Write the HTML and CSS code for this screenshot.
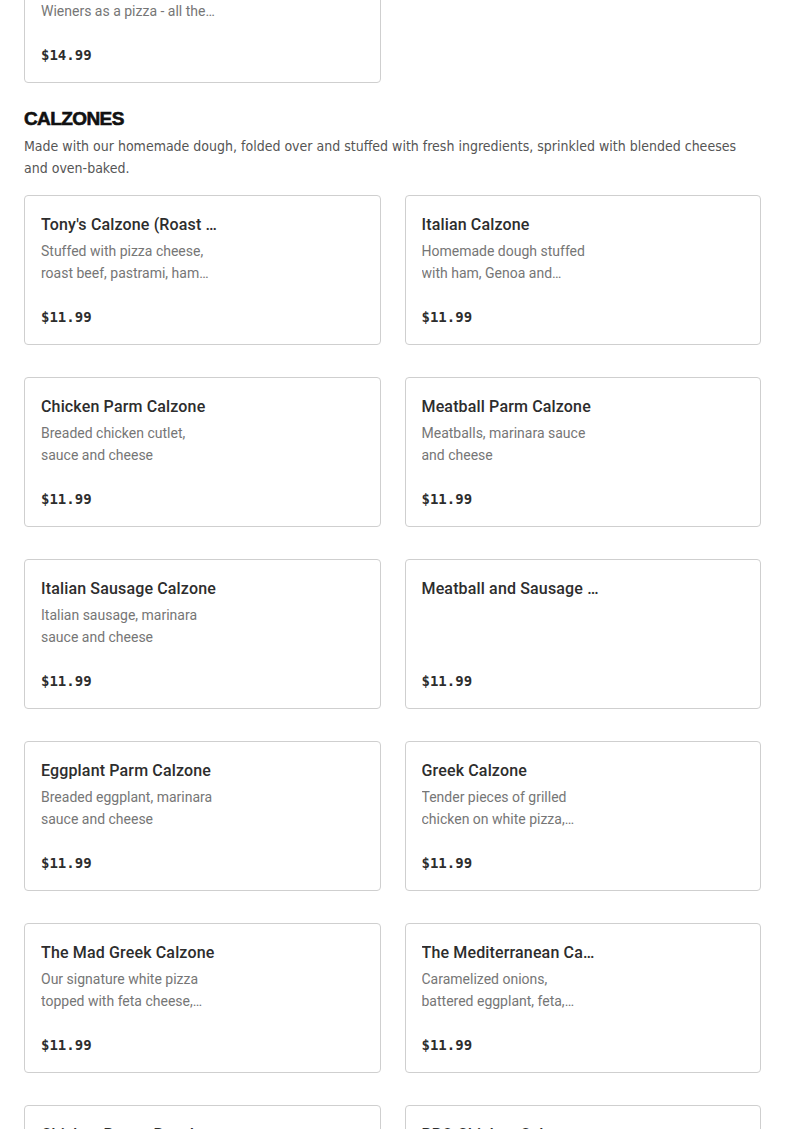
FILE: index.html
```html
<!DOCTYPE html>
<html lang="en">
<head>
<meta charset="utf-8">
<title>Menu - Calzones</title>
<link rel="stylesheet" href="styles.css">
</head>
<body>
<main class="menu">
  <section class="section section-prev">
    <div class="grid">
      <article class="card">
        <div class="card-text">
          <h3 class="card-title">Hot Wiener Pizza</h3>
          <p class="card-desc">Enjoy our famous hot dog Wieners as a pizza - all the fixings</p>
        </div>
        <div class="card-price">$14.99</div>
      </article>
    </div>
  </section>

  <section class="section">
    <h2 class="section-title">CALZONES</h2>
    <p class="section-desc">Made with our homemade dough, folded over and stuffed with fresh ingredients, sprinkled with blended cheeses and oven-baked.</p>
    <div class="grid">
      <article class="card">
        <div class="card-text">
          <h3 class="card-title">Tony's Calzone (Roast Beef, Pastrami, Ham)</h3>
          <p class="card-desc">Stuffed with pizza cheese, roast beef, pastrami, ham and salami</p>
        </div>
        <div class="card-price">$11.99</div>
      </article>
      <article class="card">
        <div class="card-text">
          <h3 class="card-title">Italian Calzone</h3>
          <p class="card-desc">Homemade dough stuffed with ham, Genoa and cooked salami</p>
        </div>
        <div class="card-price">$11.99</div>
      </article>
      <article class="card">
        <div class="card-text">
          <h3 class="card-title">Chicken Parm Calzone</h3>
          <p class="card-desc">Breaded chicken cutlet, sauce and cheese</p>
        </div>
        <div class="card-price">$11.99</div>
      </article>
      <article class="card">
        <div class="card-text">
          <h3 class="card-title">Meatball Parm Calzone</h3>
          <p class="card-desc">Meatballs, marinara sauce and cheese</p>
        </div>
        <div class="card-price">$11.99</div>
      </article>
      <article class="card">
        <div class="card-text">
          <h3 class="card-title">Italian Sausage Calzone</h3>
          <p class="card-desc">Italian sausage, marinara sauce and cheese</p>
        </div>
        <div class="card-price">$11.99</div>
      </article>
      <article class="card">
        <div class="card-text">
          <h3 class="card-title">Meatball and Sausage Calzone</h3>
        </div>
        <div class="card-price">$11.99</div>
      </article>
      <article class="card">
        <div class="card-text">
          <h3 class="card-title">Eggplant Parm Calzone</h3>
          <p class="card-desc">Breaded eggplant, marinara sauce and cheese</p>
        </div>
        <div class="card-price">$11.99</div>
      </article>
      <article class="card">
        <div class="card-text">
          <h3 class="card-title">Greek Calzone</h3>
          <p class="card-desc">Tender pieces of grilled chicken on white pizza, layered with feta</p>
        </div>
        <div class="card-price">$11.99</div>
      </article>
      <article class="card">
        <div class="card-text">
          <h3 class="card-title">The Mad Greek Calzone</h3>
          <p class="card-desc">Our signature white pizza topped with feta cheese, olives and onions</p>
        </div>
        <div class="card-price">$11.99</div>
      </article>
      <article class="card">
        <div class="card-text">
          <h3 class="card-title">The Mediterranean Calzone</h3>
          <p class="card-desc">Caramelized onions, battered eggplant, feta, spinach and tomato</p>
        </div>
        <div class="card-price">$11.99</div>
      </article>
      <article class="card">
        <div class="card-text">
          <h3 class="card-title">Chicken Bacon Ranch Calzone</h3>
          <p class="card-desc">Grilled chicken, bacon and ranch</p>
        </div>
        <div class="card-price">$11.99</div>
      </article>
      <article class="card">
        <div class="card-text">
          <h3 class="card-title">BBQ Chicken Calzone</h3>
          <p class="card-desc">Grilled chicken with BBQ sauce</p>
        </div>
        <div class="card-price">$11.99</div>
      </article>
    </div>
  </section>
</main>
</body>
</html>
```

FILE: styles.css
```css
html, body {
  margin: 0;
  padding: 0;
  background: #ffffff;
}

body {
  font-family: "Roboto", "Liberation Sans", Arial, sans-serif;
  color: #2d2d2d;
  overflow: hidden;
}

.menu {
  padding: 0 24px;
}

.section-prev {
  margin-top: -67px;
}

.section {
  display: flex;
  flex-direction: column;
}

.section-title {
  margin: 24px 0 0;
  font-family: "Liberation Sans", Arial, sans-serif;
  font-weight: 900;
  font-size: 19px;
  line-height: 24px;
  letter-spacing: -0.6px;
  -webkit-text-stroke: 0.6px #111111;
  color: #111111;
}

.section-desc {
  margin: 4px 0 16px;
  font-family: "Liberation Sans Narrow", "DejaVu Sans Condensed", sans-serif;
  font-size: 14px;
  line-height: 22px;
  color: #555555;
}

.grid {
  display: grid;
  grid-template-columns: 1fr 1fr;
  column-gap: 24px;
  row-gap: 32px;
}

.card {
  box-sizing: border-box;
  height: 150px;
  border: 1px solid #cfcfcf;
  border-radius: 4px;
  padding: 17px 16px 15px;
  display: flex;
  flex-direction: column;
}

.card-text {
  width: 179px;
  min-width: 0;
}

.card-title {
  margin: 0;
  max-width: 177px;
  font-size: 16px;
  font-weight: 500;
  line-height: 24px;
  letter-spacing: 0.15px;
  color: #2d2d2d;
  white-space: nowrap;
  overflow: hidden;
  text-overflow: ellipsis;
}

.card-desc {
  margin: 3px 0 0;
  font-size: 14px;
  line-height: 22px;
  color: #767676;
  display: -webkit-box;
  -webkit-line-clamp: 2;
  -webkit-box-orient: vertical;
  overflow: hidden;
}

.card-price {
  margin-top: auto;
  font-family: "DejaVu Sans Mono", "Liberation Mono", monospace;
  font-weight: bold;
  font-size: 14px;
  line-height: 24px;
  color: #2d2d2d;
}
```
